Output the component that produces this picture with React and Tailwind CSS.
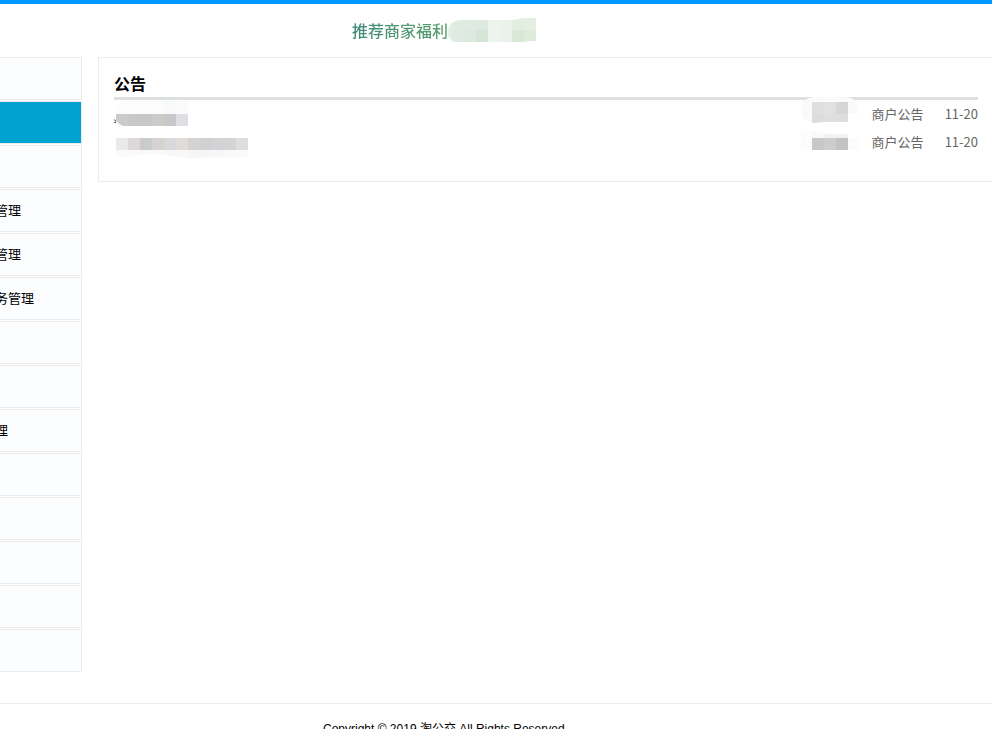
import React from "react";

const menuItems = [
  { id: 1, label: "" },
  { id: 2, label: "", active: true },
  { id: 3, label: "" },
  { id: 4, label: "管理" },
  { id: 5, label: "管理" },
  { id: 6, label: "务管理" },
  { id: 7, label: "" },
  { id: 8, label: "" },
  { id: 9, label: "理" },
  { id: 10, label: "" },
  { id: 11, label: "" },
  { id: 12, label: "" },
  { id: 13, label: "" },
  { id: 14, label: "" },
];

// Each cell is [x, y, width, height, fill]
const promoCells = [
  [0, 0, 4, 24, "#e3eee6"],
  [4, 0, 12, 12, "#e0ebe2"],
  [4, 12, 12, 12, "#dfeae2"],
  [16, 0, 12, 12, "#dfeae3"],
  [16, 12, 12, 12, "#dbe9de"],
  [28, 0, 12, 12, "#dce9e0"],
  [28, 12, 12, 12, "#d2e5d6"],
  [40, 0, 12, 24, "#edf3ed"],
  [52, 0, 12, 24, "#ebf2eb"],
  [64, 0, 12, 12, "#e3eee2"],
  [64, 12, 12, 12, "#d8e7d6"],
  [76, 0, 12, 12, "#e5eee1"],
  [76, 12, 12, 12, "#deebdb"],
];
const promoShape = "M0 12 Q2 3 12 2 H66 Q72 0 78 0 H88 V23 H80 L76 24 H6 Q1 22 0 16 Z";

const titleCells = [
  [2, 1, 48, 13, "#fcfcfc"],
  [50, 1, 12, 13, "#f8fafa"],
  [62, 1, 12, 13, "#fbfbfb"],
  [2, 14, 12, 12, "#c9cccb"],
  [14, 14, 12, 12, "#c7c8ca"],
  [26, 14, 12, 12, "#c8c7c7"],
  [38, 14, 12, 12, "#cdcac8"],
  [50, 14, 12, 12, "#c6c8cb"],
  [62, 14, 12, 12, "#dedfe2"],
  [0, 19, 1, 2, "#b8a08c"],
  [0, 22, 2, 1, "#666666"],
  [1, 20, 1, 2, "#8a8f98"],
];
const titleShape = "M0 18 H2 V8 Q4 2 12 1 H74 V26 H9 Q5 24 2 21 V23 H0 Z";

const subjectCells = [
  [2, 0, 12, 12, "#eaeaea"],
  [14, 0, 12, 12, "#ded9d9"],
  [26, 0, 12, 12, "#c9cccb"],
  [38, 0, 12, 12, "#d6d3d1"],
  [50, 0, 12, 12, "#d7d9dc"],
  [62, 0, 12, 12, "#dfdcda"],
  [74, 0, 12, 12, "#d3d3d3"],
  [86, 0, 12, 12, "#d2d1d1"],
  [98, 0, 12, 12, "#d3d3d5"],
  [110, 0, 12, 12, "#d3d4d4"],
  [122, 0, 12, 12, "#dddfde"],
  [2, 12, 24, 8, "#fafafa"],
  [26, 12, 24, 8, "#f9f9f9"],
  [50, 12, 24, 8, "#f8f8f8"],
  [74, 12, 18, 8, "#f6f6f6"],
  [92, 12, 18, 8, "#f7f7f9"],
  [110, 12, 24, 8, "#fafafa"],
];
const subjectShape = "M2 0 H134 V19 L74 20 Q60 18 50 17 Q40 15 26 17 L14 19 Q6 20 2 16 Z";

const authorCells = [
  [2, 0, 58, 28, "#fafafa"],
  [13, 5, 12, 12, "#dfdfdf"],
  [25, 5, 12, 12, "#e1e1e1"],
  [37, 5, 12, 12, "#d6d6d5"],
  [13, 17, 12, 9, "#dadcde"],
  [25, 17, 12, 9, "#dfdfdf"],
  [37, 17, 12, 9, "#dededf"],
  [2, 33, 11, 20, "#fdfcfb"],
  [13, 33, 12, 8, "#f8f9f9"],
  [25, 37, 24, 4, "#f1f3f3"],
  [13, 41, 12, 12, "#c8c8ca"],
  [25, 41, 12, 12, "#cecdce"],
  [37, 41, 12, 12, "#c3c3c3"],
  [49, 41, 11, 12, "#fafbfd"],
];
const authorShape =
  "M14 0 H46 Q59 1 59 11 V16 H49 V25 L25 25 L14 26 Q2 24 2 12 Q3 1 14 0 Z M2 33 H13 Q20 38 49 37 V41 H60 V53 H2 Z";

const notices = [
  { id: 1, category: "商户公告", date: "11-20" },
  { id: 2, category: "商户公告", date: "11-20" },
];

const Mosaic = ({ id, cells, shape, width, height, className }) => (
  <svg width={width} height={height} className={className} aria-hidden="true">
    <clipPath id={id}>
      <path d={shape} />
    </clipPath>
    <g clipPath={`url(#${id})`} shapeRendering="crispEdges">
      {cells.map(([x, y, w, h, fill]) => (
        <rect key={`${x}-${y}`} x={x} y={y} width={w} height={h} fill={fill} />
      ))}
    </g>
  </svg>
);

const Sidebar = () => (
  <nav className="flex w-[82px] shrink-0 flex-col gap-px overflow-hidden">
    {menuItems.map((item) => (
      <a
        key={item.id}
        href="#"
        className={`flex h-[43px] items-center border-y border-r border-[#ebebeb] pb-px text-[13px] whitespace-nowrap text-black ${
          item.active ? "bg-[#00a2cf]" : "bg-[#fcfdff]"
        }`}
      >
        <span className="-ml-[5px]">{item.label}</span>
      </a>
    ))}
  </nav>
);

const NoticePanel = () => (
  <section className="min-w-0 flex-1 self-start border-y border-l border-[#ebebeb] pt-[13px] pr-[14px] pb-[23px] pl-[15px]">
    <h2 className="pb-0.5 text-[16px] leading-6 font-bold text-black">公告</h2>
    <div className="flex justify-between border-t-3 border-[#dce0df]">
      <div className="flex flex-col gap-3">
        <Mosaic id="title" cells={titleCells} shape={titleShape} width={74} height={26} />
        <Mosaic id="subject" cells={subjectCells} shape={subjectShape} width={134} height={20} />
      </div>
      <div className="flex gap-[13px]">
        <Mosaic
          id="author"
          cells={authorCells}
          shape={authorShape}
          width={60}
          height={54}
          className="-mt-[3px]"
        />
        <ul>
          {notices.map((notice) => (
            <li
              key={notice.id}
              className="flex h-7 items-center gap-[21px] text-[13px] text-[#666]"
            >
              <a href="#">{notice.category}</a>
              <span>{notice.date}</span>
            </li>
          ))}
        </ul>
      </div>
    </div>
  </section>
);

const App = () => {
  return (
    <div className="h-screen overflow-hidden border-t-4 border-[#0099ff] bg-white font-['Noto_Sans_CJK_SC',sans-serif]">
      <header className="flex h-[53px] items-center pb-0.5 pl-[352px]">
        <a
          href="#"
          className="bg-linear-to-r from-[#438a78] to-[#5ba06f] bg-clip-text text-[16px] font-medium text-transparent"
        >
          推荐商家福利
        </a>
        <Mosaic id="promo" cells={promoCells} shape={promoShape} width={88} height={24} />
      </header>

      <div className="flex gap-4">
        <Sidebar />
        <NoticePanel />
      </div>

      <footer className="mt-[31px] border-t border-[#ebebeb] pt-[15px] pl-[323px] font-['Liberation_Sans','Noto_Sans_CJK_SC',sans-serif] text-[12px] leading-5 text-black">
        Copyright © 2019 淘公交 All Rights Reserved
      </footer>
    </div>
  );
};

export default App;
